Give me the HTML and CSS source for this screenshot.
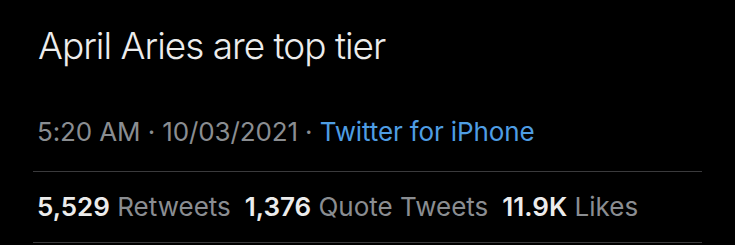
FILE: index.html
```html
<!DOCTYPE html>
<html>
<head>
<meta charset="utf-8">
<link rel="stylesheet" href="styles.css">
</head>
<body>
<div class="tweet">
  <div class="text">April Aries are top tier</div>
  <div class="meta"><span>5:20 AM · 10/03/2021 · </span><span class="source">Twitter for iPhone</span></div>
  <div class="stats">
    <span class="stat"><b>5,529</b> Retweets</span>
    <span class="stat"><b>1,376</b> Quote Tweets</span>
    <span class="stat"><b>11.9K</b> Likes</span>
  </div>
</div>
</body>
</html>
```
FILE: styles.css
```css
html, body {
  margin: 0;
  padding: 0;
  background: #000;
}
body {
  width: 735px;
  height: 245px;
  overflow: hidden;
  font-family: Inter, "Noto Sans", sans-serif;
}
.tweet {
  margin-left: 33px;
  width: 669px;
  display: flex;
  flex-direction: column;
}
.text {
  padding: 24px 0 0 5px;
  font-size: 37px;
  font-weight: 300;
  letter-spacing: -1px;
  line-height: 44px;
  color: #ececec;
}
.meta {
  padding: 48px 0 23px 4px;
  height: 32px;
  font-size: 26px;
  letter-spacing: -0.12px;
  line-height: 32px;
  color: #8a8d91;
  border-bottom: 1px solid #3a3a3c;
}
.source {
  color: #4e9de3;
}
.stats {
  padding: 19px 0 19px 4px;
  height: 32px;
  line-height: 32px;
  font-size: 26px;
  color: #8a8d91;
  border-bottom: 1px solid #3a3a3c;
  display: flex;
  gap: 14px;
}
.stats b {
  color: #ececec;
  font-weight: 600;
}
```
